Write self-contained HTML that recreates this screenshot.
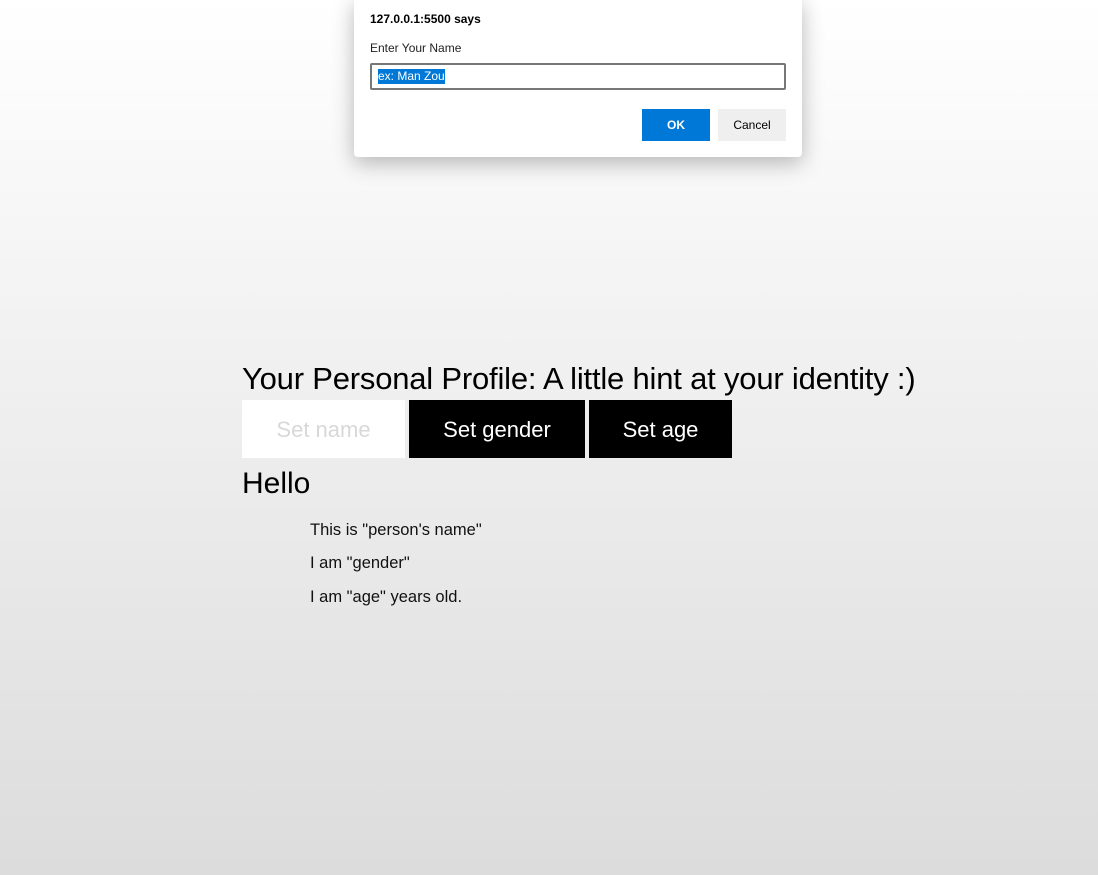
<!DOCTYPE html>
<html><head><meta charset="utf-8"><style>
html,body{margin:0;padding:0}
body{width:1098px;height:875px;position:relative;overflow:hidden;background:linear-gradient(#ffffff 0%,#f1f1f1 40%,#dcdcdc 100%);font-family:"Liberation Sans",sans-serif;}
.a{position:absolute;white-space:nowrap}
.dlg{position:absolute;left:354px;top:-2px;width:448px;height:159px;background:#fff;border-radius:0 0 4px 4px;box-shadow:0 6px 22px rgba(0,0,0,.28)}
.btn{position:absolute;top:400px;height:58px;background:#000;color:#fff;font-size:22px;line-height:60px;text-align:center}
</style></head><body>
<div class="dlg">
 <div class="a" style="left:16px;top:14px;font-size:12px;font-weight:bold;color:#000">127.0.0.1:5500 says</div>
 <div class="a" style="left:16px;top:43px;font-size:12px;color:#222">Enter Your Name</div>
 <div class="a" style="left:16px;top:65px;width:412px;height:23px;border:2px solid #777;border-radius:2px;box-sizing:content-box;"><span style="position:absolute;left:6px;top:4px;font-size:12px;background:#0078d7;color:#fff;line-height:15px">ex: Man Zou</span></div>
 <div class="a" style="left:288px;top:111px;width:68px;height:32px;background:#0078d7;color:#fff;font-size:12px;font-weight:bold;text-align:center;line-height:32px">OK</div>
 <div class="a" style="left:364px;top:111px;width:68px;height:32px;background:#efefef;color:#000;font-size:12px;text-align:center;line-height:32px">Cancel</div>
</div>
<div class="a" style="left:242px;top:361px;font-size:31px;color:#000;letter-spacing:-0.2px">Your Personal Profile: A little hint at your identity :)</div>
<div class="btn" style="left:242px;width:163px;background:#fff;color:#d8d8d8">Set name</div>
<div class="btn" style="left:409px;width:176px">Set gender</div>
<div class="btn" style="left:589px;width:143px">Set age</div>
<div class="a" style="left:242px;top:467px;font-size:30px;color:#000">Hello</div>
<div class="a" style="left:310px;top:521px;font-size:16.5px;color:#111">This is "person's name"</div>
<div class="a" style="left:310px;top:554px;font-size:16.5px;color:#111">I am "gender"</div>
<div class="a" style="left:310px;top:588px;font-size:16.5px;color:#111">I am "age" years old.</div>
</body></html>
